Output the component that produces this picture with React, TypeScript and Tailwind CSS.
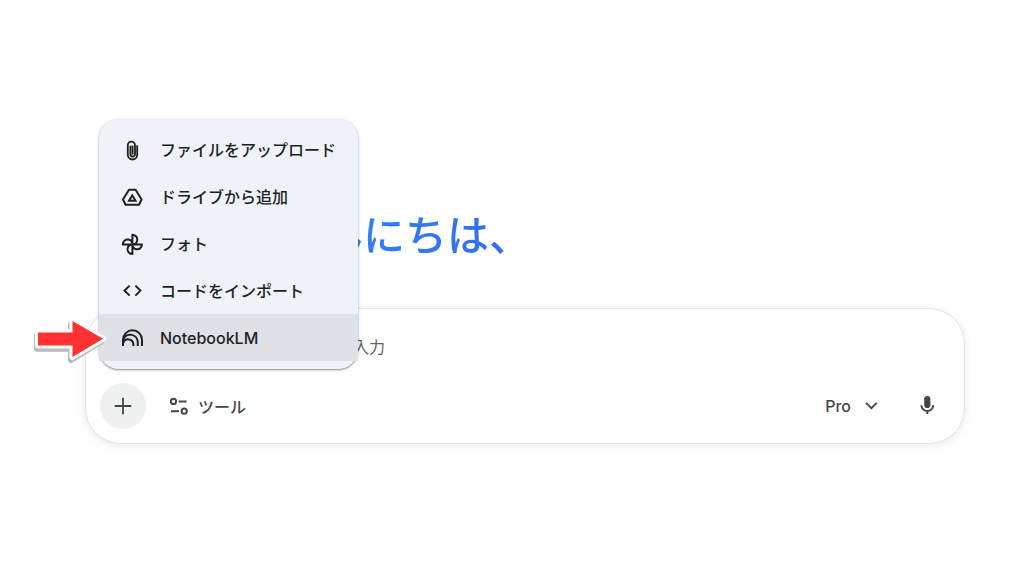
import type { ReactNode } from 'react';

const Svg = ({ children }: { children: ReactNode }) => (
  <svg
    viewBox="0 0 24 24"
    className="size-6 shrink-0"
    fill="none"
    stroke="currentColor"
    strokeWidth="2"
    aria-hidden="true"
  >
    {children}
  </svg>
);

const ClipIcon = () => (
  <Svg>
    <path
      strokeWidth="1.8"
      d="M17.2 7.2V16.8a4.7 4.7 0 0 1-9.4 0V7.3a3.6 3.6 0 0 1 7.2 0v9a2.3 2.3 0 0 1-4.6 0V7.8M12.6 7.600v9"
    />
  </Svg>
);

const DriveIcon = () => (
  <Svg>
    <path strokeLinejoin="round" d="M9 4.7h6.6l6 9.800-2.600 5.300H5.600L3 14.500z" />
    <path d="M12.3 10.4l3.300 5.400H9z" />
  </Svg>
);

const PhotosIcon = () => (
  <Svg>
    <path
      strokeLinejoin="round"
      d="M12.4 12.4V2.8c3.6.2 5.4 3 4.8 5.8-.5 2.3-2.3 3.8-4.8 3.8M12.4 12.4H22c-.2 3.6-3 5.4-5.8 4.8-2.3-.5-3.8-2.3-3.8-4.8M12.4 12.4V22c-3.6-.2-5.4-3-4.8-5.8.5-2.3 2.3-3.8 4.8-3.8M12.4 12.4H2.8c.2-3.6 3-5.4 5.8-4.8 2.3.5 3.8 2.3 3.8 4.8"
    />
  </Svg>
);

const CodeIcon = () => (
  <Svg>
    <path d="M9.6 6.6L4.6 11.6l5 5M15.400 6.600l5 5-5 5" />
  </Svg>
);

const NotebookIcon = () => (
  <Svg>
    <path d="M3 20v-6.2a9.5 9.5 0 0 1 19 0V20M3.2 13.4a7.6 7.6 0 0 1 14.6 2.8V20M3.2 17.2a5.2 5.2 0 0 1 10.2 1V20" />
  </Svg>
);

const items = [
  { label: 'ファイルをアップロード', Icon: ClipIcon },
  { label: 'ドライブから追加', Icon: DriveIcon },
  { label: 'フォト', Icon: PhotosIcon },
  { label: 'コードをインポート', Icon: CodeIcon },
  { label: 'NotebookLM', Icon: NotebookIcon },
];

export default function App() {
  return (
    <main className="relative min-h-screen bg-white pt-[203px] pr-[59px] pl-[85px] font-['Inter','Noto_Sans_CJK_JP',sans-serif] text-[#444746]">
      <h1 className="pl-[194px] text-[42px] leading-[65px] font-medium">
        <span className="bg-linear-to-r from-[#3186ff] to-[#346bf1] bg-clip-text text-transparent">こんにちは、</span>
      </h1>

      <form className="mt-10 rounded-[36px] border border-[#e3e4e6] bg-white pt-6 pr-[25px] pb-[14px] pl-[14px] shadow-[0_2px_10px_rgba(0,0,0,0.09)]">
        <input
          type="text"
          aria-label="プロンプト"
          placeholder="ここに入力"
          className="block h-7 w-full pl-[205px] text-base outline-none placeholder:text-[#5f6368]"
        />
        <div className="mt-[22px] flex items-center">
          <button
            type="button"
            aria-label="追加"
            className="flex size-[46px] items-center justify-center rounded-full bg-[#eff1f1]"
          >
            <Svg>
              <path strokeWidth="1.8" d="M12 3.7v16.6M3.7 12h16.6" />
            </Svg>
          </button>
          <button type="button" className="ml-5 flex items-center gap-2 text-base font-medium">
            <Svg>
              <circle cx="7.5" cy="7.4" r="2.6" />
              <path d="M12.6 7.4h8M5 17.2h8" />
              <circle cx="18.2" cy="17.2" r="2.6" />
            </Svg>
            <span className="pt-0.5">ツール</span>
          </button>
          <button type="button" className="ml-auto flex items-center gap-2 text-base font-medium">
            Pro
            <Svg>
              <path d="M7 8.900l5.400 5.200 5.400-5.200" />
            </Svg>
          </button>
          <button type="button" aria-label="マイク" className="ml-8">
            <Svg>
              <rect x="9.2" y="2" width="6.2" height="12" rx="3.1" fill="currentColor" stroke="none" />
              <path d="M6.4 11.2a5.9 5.9 0 0 0 11.8 0M12.3 17v3" />
            </Svg>
          </button>
        </div>
      </form>

      <div
        role="menu"
        className="absolute top-[119px] left-[99px] w-[259px] rounded-[20px] bg-[#eff3f8] pt-[7px] pb-2 text-[#1f1f1f] shadow-[0_1px_2px_rgba(0,0,0,0.4),0_1px_4px_rgba(0,0,0,0.1)]"
      >
        {items.map(({ label, Icon }) => (
          <button
            key={label}
            type="button"
            role="menuitem"
            className="flex h-[47px] w-full items-center gap-4 pl-[21px] text-base font-medium whitespace-nowrap last:bg-[#dee1e6]"
          >
            <Icon />
            <span className="pt-px">{label}</span>
          </button>
        ))}
      </div>

      <svg
        viewBox="0 0 76 52"
        className="absolute top-[316px] left-[31px] h-[52px] w-[76px]"
        strokeWidth="6"
        strokeLinejoin="round"
        aria-hidden="true"
      >
        <path d="M6 19.700H40V8L70 25.500 40 44V32.700H6z" fill="#b9b9b9" stroke="#b9b9b9" />
        <path
          d="M7 16.500H41.500V5L72 22.700 41.500 41V29.500H7z"
          fill="#ff3131"
          stroke="#fff"
          paintOrder="stroke"
        />
      </svg>
    </main>
  );
}
